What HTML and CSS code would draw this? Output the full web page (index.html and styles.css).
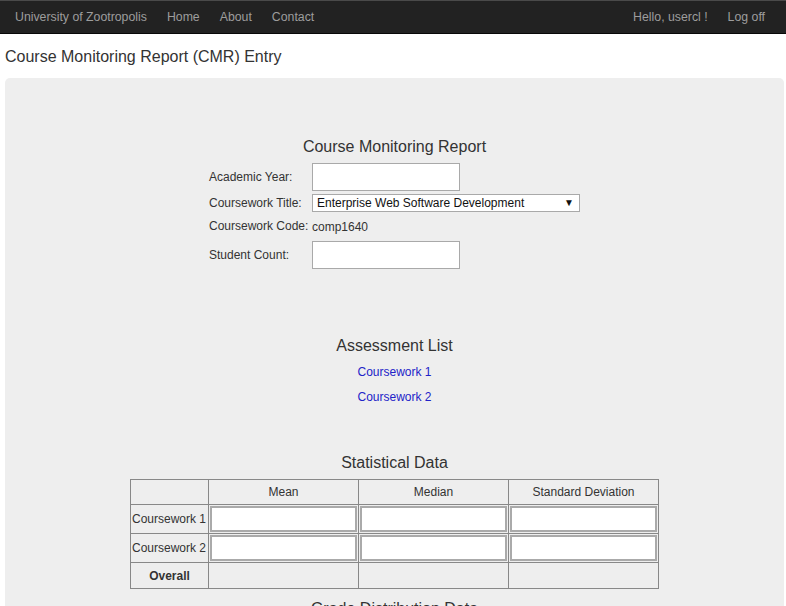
FILE: index.html
```html
<!DOCTYPE html>
<html>
<head>
<meta charset="utf-8">
<title>CMR Entry</title>
<link rel="stylesheet" href="styles.css">
</head>
<body>
<nav class="navbar">
  <div class="nav-left">
    <a class="brand" href="#">University of Zootropolis</a>
    <a class="nav-link" href="#">Home</a>
    <a class="nav-link" href="#">About</a>
    <a class="nav-link" href="#">Contact</a>
  </div>
  <div class="nav-right">
    <a class="nav-link" href="#">Hello, usercl !</a>
    <a class="nav-link" href="#">Log off</a>
  </div>
</nav>

<h2 class="page-title">Course Monitoring Report (CMR) Entry</h2>

<main class="panel">
  <h3 class="section-title first">Course Monitoring Report</h3>
  <div class="form-grid">
    <label class="form-label">Academic Year:</label>
    <div><input class="text-input" type="text"></div>
    <label class="form-label">Coursework Title:</label>
    <div class="select-wrap">
      <select class="select">
        <option>Enterprise Web Software Development</option>
      </select>
      <span class="select-arrow">▼</span>
    </div>
    <label class="form-label">Coursework Code:</label>
    <div class="form-value">comp1640</div>
    <label class="form-label">Student Count:</label>
    <div><input class="text-input" type="text"></div>
  </div>

  <h3 class="section-title assess">Assessment List</h3>
  <ul class="link-list">
    <li><a href="#">Coursework 1</a></li>
    <li><a href="#">Coursework 2</a></li>
  </ul>

  <h3 class="section-title stats">Statistical Data</h3>
  <table class="stats-table">
    <colgroup>
      <col class="c-first"><col class="c-data"><col class="c-data"><col class="c-data">
    </colgroup>
    <thead>
      <tr class="head-row"><th></th><th>Mean</th><th>Median</th><th>Standard Deviation</th></tr>
    </thead>
    <tbody>
      <tr class="input-row">
        <td class="row-label">Coursework 1</td>
        <td><input class="cell-input" type="text"></td>
        <td><input class="cell-input" type="text"></td>
        <td><input class="cell-input" type="text"></td>
      </tr>
      <tr class="input-row">
        <td class="row-label">Coursework 2</td>
        <td><input class="cell-input" type="text"></td>
        <td><input class="cell-input" type="text"></td>
        <td><input class="cell-input" type="text"></td>
      </tr>
      <tr class="overall-row">
        <th>Overall</th><td></td><td></td><td></td>
      </tr>
    </tbody>
  </table>

  <h3 class="section-title grade">Grade Distribution Data</h3>
</main>
</body>
</html>
```

FILE: styles.css
```css
html, body {
  margin: 0;
  padding: 0;
  background: #fff;
  overflow: hidden;
}
body {
  font-family: "Liberation Sans", Arial, sans-serif;
  font-size: 12px;
  color: #333;
  height: 606px;
}

.navbar {
  display: flex;
  justify-content: space-between;
  align-items: center;
  background: #222;
  border-top: 1px solid #4a4a4a;
  border-bottom: 1px solid #080808;
  box-sizing: content-box;
  padding: 0 11px 0 5px;
  height: 32px;
}
.nav-left, .nav-right {
  display: flex;
  align-items: center;
}
.navbar a {
  color: #9d9d9d;
  text-decoration: none;
  font-size: 12.3px;
  padding: 0 10px;
  line-height: 32px;
}

.page-title {
  font-size: 16px;
  font-weight: normal;
  color: #333;
  margin: 0;
  padding: 14px 5px 0;
  line-height: 18px;
  height: 30px;
}

.panel {
  background: #eee;
  margin: 0 2px 0 5px;
  border-radius: 5px;
  padding: 60px 0 0;
  height: 600px;
  display: flex;
  flex-direction: column;
  align-items: center;
}

.section-title {
  font-size: 16px;
  font-weight: normal;
  color: #333;
  margin: 0;
  line-height: 18px;
  text-align: center;
}
.section-title.first { margin-bottom: 7px; }
.section-title.assess { margin-top: 68px; }
.section-title.stats { margin-top: 39px; margin-bottom: 7px; }
.section-title.grade { margin-top: 11px; }

.form-grid {
  display: grid;
  grid-template-columns: 103px 268px;
  grid-template-rows: 28px 18px 23px 28px;
  row-gap: 3px;
  align-items: center;
}
.form-label, .form-value {
  font-size: 12px;
  line-height: 14px;
}
.form-label { margin-top: -1px; }
.text-input {
  display: block;
  box-sizing: border-box;
  width: 148px;
  height: 28px;
  border: 1px solid #a9a9a9;
  background: #fff;
  margin: 0;
  padding: 0 4px;
}
.select-wrap {
  position: relative;
  height: 18px;
}
.select {
  -webkit-appearance: none;
  appearance: none;
  display: block;
  box-sizing: border-box;
  width: 268px;
  height: 18px;
  margin: 0;
  border: 1px solid #a9a9a9;
  border-radius: 0;
  background: #fff;
  font-family: "Liberation Sans", Arial, sans-serif;
  font-size: 12px;
  color: #111;
  padding: 0 0 0 4px;
  line-height: 16px;
}
.select-arrow {
  position: absolute;
  right: 6px;
  top: 3px;
  font-size: 10px;
  line-height: 11px;
  color: #111;
  pointer-events: none;
}

.link-list {
  list-style: none;
  margin: 10px 0 0;
  padding: 0;
  text-align: center;
}
.link-list li {
  line-height: 14px;
  margin-bottom: 11px;
}
.link-list a {
  color: #2222c8;
  text-decoration: none;
  font-size: 12px;
}

.stats-table {
  border-collapse: collapse;
  table-layout: fixed;
  width: 529px;
  font-size: 12px;
}
.c-first { width: 78px; }
.c-data { width: 150px; }
.stats-table th, .stats-table td {
  border: 1px solid #888;
  padding: 1px;
  text-align: center;
  font-weight: normal;
}
.head-row th { height: 22px; }
.input-row td { height: 26px; }
.stats-table .row-label {
  text-align: left;
  white-space: nowrap;
  padding: 0 1px;
}
.overall-row th, .overall-row td {
  height: 23px;
}
.overall-row th { font-weight: bold; }
.cell-input {
  display: block;
  box-sizing: border-box;
  width: 100%;
  height: 26px;
  margin: 0;
  border: 2px solid #aaa;
  background: #fff;
}
```
